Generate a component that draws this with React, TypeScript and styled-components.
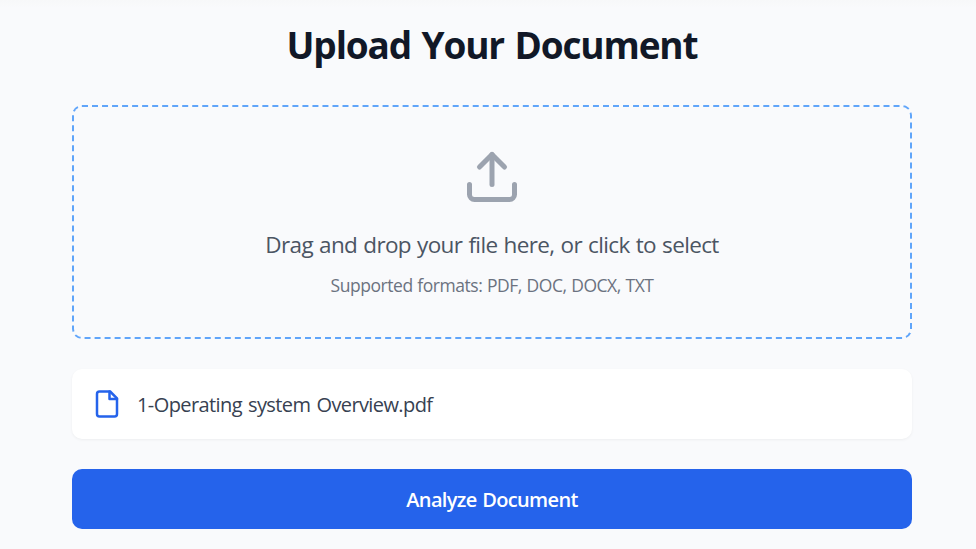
import React from "react";
import styled, { createGlobalStyle } from "styled-components";

const GlobalStyle = createGlobalStyle`
  *, *::before, *::after { box-sizing: border-box; }
  body {
    margin: 0;
    background: #f9fafc linear-gradient(#f7f8f9, #f9fafc) 0 0 / 100% 8px no-repeat;
    font-family: "Open Sans", "Noto Sans", sans-serif;
    overflow: hidden;
  }
`;

const Page = styled.main`
  width: 840px;
  margin: 0 0 0 72px;
  padding-top: 20px;
  display: flex;
  flex-direction: column;
`;

const Title = styled.h1`
  margin: 0 0 35px;
  height: 50px;
  line-height: 50px;
  font-size: 37px;
  font-weight: 700;
  letter-spacing: -1.15px;
  word-spacing: 2px;
  text-align: center;
  color: #111827;
  white-space: nowrap;
`;

const DropZone = styled.section`
  height: 234px;
  border: 2px dashed #60a5fa;
  border-radius: 10px;
  display: flex;
  flex-direction: column;
  align-items: center;
  padding-top: 40px;
`;

const UploadIcon = styled.svg`
  width: 60px;
  height: 60px;
  color: #9ca3af;
  margin-bottom: 20px;
`;

const Prompt = styled.p`
  margin: 0 0 11px;
  font-size: 22.5px;
  line-height: 35px;
  letter-spacing: -0.62px;
  word-spacing: 0.8px;
  color: #4b5563;
  white-space: nowrap;
`;

const Formats = styled.p`
  margin: 0;
  font-size: 17.5px;
  line-height: 25px;
  letter-spacing: -0.45px;
  word-spacing: 0.5px;
  color: #6b7280;
  white-space: nowrap;
`;

const FileCard = styled.div`
  margin-top: 30px;
  height: 70px;
  padding: 0 20px;
  display: flex;
  align-items: center;
  gap: 15px;
  border-radius: 10px;
  background: #fff;
  box-shadow: 0 1px 3px rgba(0, 0, 0, 0.05);
`;

const FileIcon = styled.svg`
  width: 30px;
  height: 30px;
  color: #2563eb;
`;

const FileName = styled.span`
  font-size: 20px;
  letter-spacing: -0.6px;
  word-spacing: 1.5px;
  color: #374151;
  white-space: nowrap;
`;

const AnalyzeButton = styled.button`
  margin-top: 30px;
  height: 60px;
  border: 0;
  border-radius: 10px;
  background: #2563eb;
  color: #fff;
  font: 600 20px "Open Sans", "Noto Sans", sans-serif;
  letter-spacing: -0.65px;
  word-spacing: 1px;
`;

const stroke = {
  viewBox: "0 0 24 24",
  fill: "none",
  stroke: "currentColor",
  strokeWidth: 2,
  strokeLinecap: "round" as const,
  strokeLinejoin: "round" as const,
};

export default function App() {
  return (
    <>
      <GlobalStyle />
      <Page>
        <Title>Upload Your Document</Title>
        <DropZone>
          <UploadIcon {...stroke}>
            <path d="M21 15v4a2 2 0 0 1-2 2H5a2 2 0 0 1-2-2v-4" />
            <path d="M17 8l-5-5-5 5" />
            <path d="M12 3v12" />
          </UploadIcon>
          <Prompt>Drag and drop your file here, or click to select</Prompt>
          <Formats>Supported formats: PDF, DOC, DOCX, TXT</Formats>
        </DropZone>
        <FileCard>
          <FileIcon {...stroke}>
            <path d="M14.5 2H6a2 2 0 0 0-2 2v16a2 2 0 0 0 2 2h12a2 2 0 0 0 2-2V7.5L14.5 2z" />
            <path d="M14 2v6h6" />
          </FileIcon>
          <FileName>1-Operating system Overview.pdf</FileName>
        </FileCard>
        <AnalyzeButton type="button">Analyze Document</AnalyzeButton>
      </Page>
    </>
  );
}
